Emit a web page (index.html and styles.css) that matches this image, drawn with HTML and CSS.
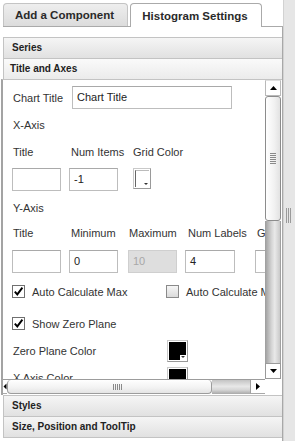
FILE: index.html
```html
<!DOCTYPE html>
<html>
<head>
<meta charset="utf-8">
<link rel="stylesheet" href="styles.css">
</head>
<body>
<div class="app">
  <div class="pane">
    <div class="tabs">
      <div class="tab">Add a Component</div>
      <div class="tab active">Histogram Settings</div>
    </div>
    <div class="panel">
      <div class="acc">
        <div class="acc-h">Series</div>
        <div class="acc-h open">Title and Axes</div>
        <div class="acc-body">
          <div class="viewport">
            <div class="form">
              <div class="row-title">
                <span class="lbl w60">Chart Title</span>
                <div class="inp wide">Chart Title</div>
              </div>
              <div class="section">X-Axis</div>
              <div class="grid-x lbls">
                <span class="lbl">Title</span>
                <span class="lbl">Num Items</span>
                <span class="lbl">Grid Color</span>
              </div>
              <div class="grid-x inputs">
                <div class="inp"></div>
                <div class="inp">-1</div>
                <div class="swatch"><div class="fill white"></div><span class="drop"></span></div>
              </div>
              <div class="section tall">Y-Axis</div>
              <div class="grid-y lbls short">
                <span class="lbl">Title</span>
                <span class="lbl">Minimum</span>
                <span class="lbl">Maximum</span>
                <span class="lbl">Num Labels</span>
                <span class="lbl">Grid Color</span>
              </div>
              <div class="grid-y inputs gap9">
                <div class="inp"></div>
                <div class="inp">0</div>
                <div class="inp disabled">10</div>
                <div class="inp num">4</div>
                <div class="inp"></div>
              </div>
              <div class="checks">
                <label class="chk first"><span class="box on"><svg width="11" height="11" viewBox="0 0 11 11"><path d="M1.8 5.6 L4.3 8.4 L9.4 1.6" fill="none" stroke="#000" stroke-width="1.9"/></svg></span>Auto Calculate Max</label>
                <label class="chk"><span class="box"></span>Auto Calculate Min</label>
              </div>
              <div class="checks single">
                <label class="chk"><span class="box on"><svg width="11" height="11" viewBox="0 0 11 11"><path d="M1.8 5.6 L4.3 8.4 L9.4 1.6" fill="none" stroke="#000" stroke-width="1.9"/></svg></span>Show Zero Plane</label>
              </div>
              <div class="color-row">
                <span class="lbl">Zero Plane Color</span>
                <div class="swatch big"><div class="fill black"></div><span class="drop"></span></div>
              </div>
              <div class="color-row">
                <span class="lbl">X Axis Color</span>
                <div class="swatch big"><div class="fill black"></div><span class="drop"></span></div>
              </div>
            </div>
          </div>
          <div class="vscroll">
            <div class="vs-btn up"><svg width="7" height="4" viewBox="0 0 7 4"><path d="M0 4 L3.5 0 L7 4 Z" fill="#000"/></svg></div>
            <div class="vs-thumb"><span class="vgrip"></span></div>
            <div class="vs-track"></div>
            <div class="vs-btn down"><svg width="7" height="4" viewBox="0 0 7 4"><path d="M0 0 L3.5 4 L7 0 Z" fill="#000"/></svg></div>
          </div>
          <div class="hscroll">
            <div class="hs-left"><svg width="4" height="7" viewBox="0 0 4 7"><path d="M0.5 3.5 L3.5 0.5 L3.5 6.5 Z" fill="#000"/></svg></div>
            <div class="hs-thumb"><span class="hgrip"></span></div>
            <div class="hs-track"></div>
            <div class="hs-right"><svg width="4" height="7" viewBox="0 0 4 7"><path d="M0 0 L4 3.5 L0 7 Z" fill="#000"/></svg></div>
          </div>
          <div class="corner"></div>
        </div>
        <div class="acc-h">Styles</div>
        <div class="acc-h last">Size, Position and ToolTip</div>
      </div>
    </div>
  </div>
  <div class="splitter"><span class="sgrip"></span></div>
</div>
</body>
</html>
```
FILE: styles.css
```css
* { box-sizing: border-box; }
html, body { margin: 0; padding: 0; background: #fff; }
body { font-family: "Liberation Sans", Arial, sans-serif; color: #333; }

.app { display: flex; height: 441px; overflow: hidden; }
.pane { width: 283px; display: flex; flex-direction: column; background: #fff; }

.tabs {
  display: flex; gap: 2px; height: 27px; padding-top: 3px; margin-left: 3px;
  border-bottom: 1px solid #aaa; align-items: flex-start;
}
.tab {
  width: 125px; height: 23px; border: 1px solid #c4c4c4; border-bottom: none;
  border-radius: 4px 4px 0 0;
  background: linear-gradient(#eeeeee, #dcdcdc);
  font-weight: bold; font-size: 11.5px; color: #2a2a2a;
  display: flex; align-items: center; justify-content: center; padding-right: 2px;
}
.tab.active {
  width: 132px; height: 24px; background: #fff; border-color: #aaa;
  margin-bottom: -1px; position: relative; padding-top: 1px;
}

.panel { flex: 1; border-right: 1px solid #a8a8a8; }
.acc { margin-left: 3px; margin-top: 10px; }
.acc-h {
  height: 21px; border-top: 1px solid #c3c3c3; border-left: 1px solid #c3c3c3;
  padding-left: 8px; line-height: 20px; font-weight: bold; font-size: 10px; color: #222;
  background: linear-gradient(#f5f5f5, #e1e1e1);
}
.acc-h.open { background: linear-gradient(#fafafa, #ebebeb); padding-left: 6px; }
.acc-h.last { border-bottom: 1px solid #c3c3c3; height: 22px; }

.acc-body {
  height: 316px; margin-left: -2px; border-left: 2px solid #a3a3a3; border-top: 1px solid #c3c3c3;
  display: grid; grid-template-columns: 262px 16px; grid-template-rows: 299px 16px;
  background: #fff;
}
.viewport { grid-column: 1; grid-row: 1; overflow: hidden; position: relative; }
.vscroll { grid-column: 2; grid-row: 1; }
.hscroll { grid-column: 1; grid-row: 2; }
.corner { grid-column: 2; grid-row: 2; background: #fff; }

.form { padding: 6px 0 0 9px; width: 330px; font-size: 11px; color: #333; }
.lbl { padding-left: 1px; white-space: nowrap; }
.w60 { width: 60px; }

.row-title { display: flex; align-items: center; height: 23px; }
.inp {
  width: 49px; height: 23px; border: 1px solid #bdbdbd; border-top-color: #a9a9a9;
  padding-left: 4px; line-height: 21px; font-size: 11px; color: #222; background: #fff;
}
.inp.wide { width: 160px; }
.inp.num { width: 50px; }
.inp.disabled { background: #dedede; border-color: #cfcfcf; color: #a8a8a8; }

.section { height: 32px; line-height: 32px; padding-left: 1px; }
.section.tall { height: 34px; line-height: 34px; }
.lbls { height: 22px; align-items: center; }
.lbls.short { height: 16px; }
.grid-x { display: grid; grid-template-columns: 57px 64px auto; }
.grid-y { display: grid; grid-template-columns: 57px 59px 57px 70px auto; }
.inputs { margin-top: 5px; height: 23px; }
.inputs.gap9 { margin-top: 9px; }
.grid-y .lbl:nth-child(2) { padding-left: 2px; }
.grid-y .lbl:nth-child(4) { padding-left: 3px; }
.grid-y .lbl:nth-child(5) { padding-left: 2px; }
.grid-x .lbl:nth-child(2) { padding-left: 2px; }
.grid-x .lbl:nth-child(3) { padding-left: 0; }

.swatch {
  position: relative; width: 18px; height: 21px; padding: 1px;
  border: 1px solid; border-color: #c9c9c9 #9a9a9a #9a9a9a #c9c9c9; background: #fff;
}
.swatch.big { width: 21px; height: 22px; }
.fill { width: 100%; height: 100%; }
.fill.white { background: #fff; border-left: 1px solid #666; border-top: 1px solid #bbb; }
.fill.black { background: #000; }
.drop {
  position: absolute; right: 1px; bottom: 1px; width: 6px; height: 5px; background: #fff;
}
.drop::after {
  content: ""; position: absolute; left: 1px; top: 1px;
  border-left: 2px solid transparent; border-right: 2px solid transparent; border-top: 2px solid #333;
}

.checks { display: flex; align-items: center; height: 37px; padding-left: 0; }
.checks.single { height: 27px; }
.chk { display: flex; align-items: center; gap: 7px; white-space: nowrap; }
.chk.first { width: 154px; }
.box {
  width: 13px; height: 13px; border: 1px solid #8a8a8a;
  background: linear-gradient(#f6f6f6, #dadada); display: flex; align-items: center; justify-content: center;
}
.box.on { background: #fff; border-color: #707070; }

.color-row { display: grid; grid-template-columns: 155px auto; align-items: center; height: 27px; }

.vscroll { display: flex; flex-direction: column; background: #fff; }
.vs-btn {
  height: 16px; border: 1px solid #b9b9b9; background: #fff;
  display: flex; align-items: center; justify-content: center;
}
.vs-btn.up { border-top-color: #e0e0e0; }
.vs-btn.down { border-color: #9a9a9a; }
.vs-thumb {
  height: 125px; border: 1px solid #8c8c8c; border-radius: 3px;
  background: linear-gradient(to right, #ffffff, #f1f1f1 60%, #e2e2e2);
  display: flex; align-items: center; justify-content: center;
}
.vgrip {
  width: 6px; height: 11px;
  background: repeating-linear-gradient(#8a8a8a 0 1px, transparent 1px 2px);
}
.vs-track {
  flex: 1;
  background: linear-gradient(to right, #9c9c9c, #d6d6d6 45%, #e9e9e9 65%, #c9c9c9);
  border-right: 1px solid #a0a0a0;
}

.hscroll { display: flex; height: 16px; border-top: 1px solid #9c9c9c; }
.hs-left {
  width: 4px; height: 14px; overflow: hidden; background: #fff;
  display: flex; align-items: center; border-bottom: 1px solid #aaa;
}
.hs-thumb {
  width: 205px; height: 14px; border: 1px solid #9c9c9c; border-top: none; border-radius: 4px;
  background: linear-gradient(#ffffff, #f2f2f2 60%, #e4e4e4);
  display: flex; align-items: center;
}
.hgrip {
  margin-left: 105px; width: 9px; height: 6px;
  background: repeating-linear-gradient(to right, #8a8a8a 0 1px, transparent 1px 2px);
}
.hs-track {
  width: 38px; height: 14px;
  background: linear-gradient(#c4c4c4, #e8e8e8 45%, #d6d6d6 70%, #a8a8a8);
}
.hs-right {
  flex: 1; height: 14px; background: #fff; border-left: 1px solid #a0a0a0; border-bottom: 1px solid #a8a8a8;
  display: flex; align-items: center; justify-content: center;
}

.splitter {
  flex: 1; background: #e6e6e6; border-left: 1px solid #d2d2d2;
  padding-top: 208px; padding-left: 2px;
}
.sgrip {
  display: block; width: 5px; height: 15px;
  background: repeating-linear-gradient(to right, #9a9a9a 0 1px, transparent 1px 2px);
}
```
